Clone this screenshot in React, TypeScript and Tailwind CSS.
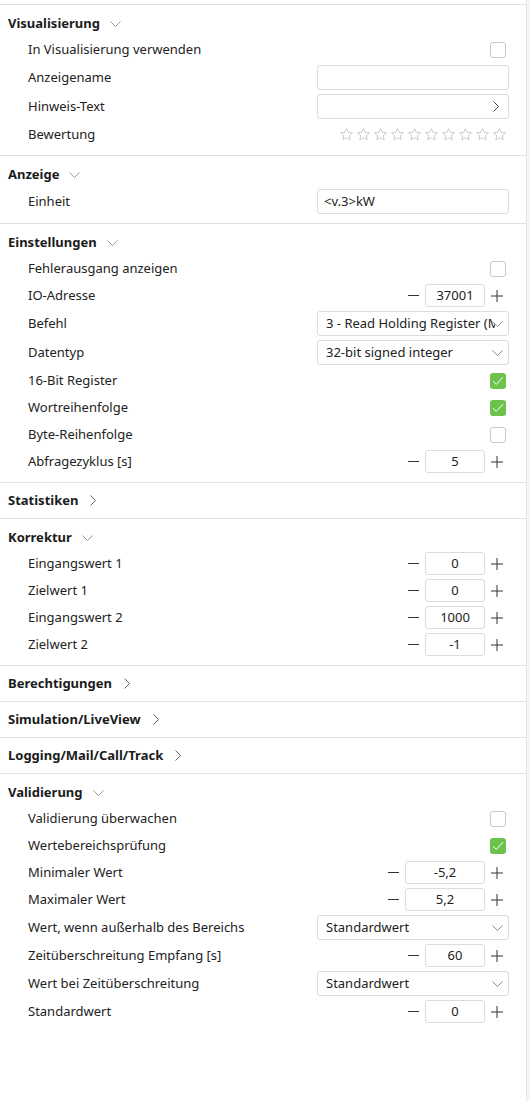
import React from 'react'

type Row =
  | { kind: 'check'; label: string; checked?: boolean }
  | { kind: 'text'; label: string; value?: string; arrow?: boolean }
  | { kind: 'select'; label: string; value: string }
  | { kind: 'number'; label: string; value: string; wide?: boolean }
  | { kind: 'stars'; label: string }

type Section = { title: string; open: boolean; rows?: Row[] }

const sections: Section[] = [
  {
    title: 'Visualisierung',
    open: true,
    rows: [
      { kind: 'check', label: 'In Visualisierung verwenden' },
      { kind: 'text', label: 'Anzeigename' },
      { kind: 'text', label: 'Hinweis-Text', arrow: true },
      { kind: 'stars', label: 'Bewertung' },
    ],
  },
  {
    title: 'Anzeige',
    open: true,
    rows: [{ kind: 'text', label: 'Einheit', value: '<v.3>kW' }],
  },
  {
    title: 'Einstellungen',
    open: true,
    rows: [
      { kind: 'check', label: 'Fehlerausgang anzeigen' },
      { kind: 'number', label: 'IO-Adresse', value: '37001' },
      { kind: 'select', label: 'Befehl', value: '3 - Read Holding Register (Modbus)' },
      { kind: 'select', label: 'Datentyp', value: '32-bit signed integer' },
      { kind: 'check', label: '16-Bit Register', checked: true },
      { kind: 'check', label: 'Wortreihenfolge', checked: true },
      { kind: 'check', label: 'Byte-Reihenfolge' },
      { kind: 'number', label: 'Abfragezyklus [s]', value: '5' },
    ],
  },
  { title: 'Statistiken', open: false },
  {
    title: 'Korrektur',
    open: true,
    rows: [
      { kind: 'number', label: 'Eingangswert 1', value: '0' },
      { kind: 'number', label: 'Zielwert 1', value: '0' },
      { kind: 'number', label: 'Eingangswert 2', value: '1000' },
      { kind: 'number', label: 'Zielwert 2', value: '-1' },
    ],
  },
  { title: 'Berechtigungen', open: false },
  { title: 'Simulation/LiveView', open: false },
  { title: 'Logging/Mail/Call/Track', open: false },
  {
    title: 'Validierung',
    open: true,
    rows: [
      { kind: 'check', label: 'Validierung überwachen' },
      { kind: 'check', label: 'Wertebereichsprüfung', checked: true },
      { kind: 'number', label: 'Minimaler Wert', value: '-5,2', wide: true },
      { kind: 'number', label: 'Maximaler Wert', value: '5,2', wide: true },
      { kind: 'select', label: 'Wert, wenn außerhalb des Bereichs', value: 'Standardwert' },
      { kind: 'number', label: 'Zeitüberschreitung Empfang [s]', value: '60' },
      { kind: 'select', label: 'Wert bei Zeitüberschreitung', value: 'Standardwert' },
      { kind: 'number', label: 'Standardwert', value: '0' },
    ],
  },
]

function ChevronDown({ className = '' }: { className?: string }) {
  return (
    <svg width="11" height="6" viewBox="0 0 11 6" className={className} fill="none">
      <path d="M0.5 0.5 L5.5 5.5 L10.5 0.5" stroke="currentColor" strokeWidth="1" />
    </svg>
  )
}

function ChevronRight({ className = '' }: { className?: string }) {
  return (
    <svg width="6" height="11" viewBox="0 0 6 11" className={className} fill="none">
      <path d="M0.5 0.5 L5.5 5.5 L0.5 10.5" stroke="currentColor" strokeWidth="1" />
    </svg>
  )
}

function Star() {
  return (
    <svg width="15" height="15" viewBox="0 0 24 24" fill="none">
      <path
        d="M12 2.5 L14.8 8.6 L21.5 9.3 L16.5 13.8 L17.9 20.5 L12 17.1 L6.1 20.5 L7.5 13.8 L2.5 9.3 L9.2 8.6 Z"
        stroke="#c4c4c4"
        strokeWidth="1.4"
        strokeLinejoin="round"
      />
    </svg>
  )
}

function Checkbox({ checked }: { checked?: boolean }) {
  return checked ? (
    <div className="mr-[3px] flex h-4 w-4 items-center justify-center rounded-[3px] bg-[#6cc24a]">
      <svg width="12" height="10" viewBox="0 0 12 10" fill="none">
        <path d="M1 5.2 L4.3 8.4 L11 1.2" stroke="white" strokeWidth="1" />
      </svg>
    </div>
  ) : (
    <div className="mr-[3px] h-4 w-4 rounded-[3px] border border-[#c8c8c8] bg-white" />
  )
}

function NumberInput({ value, wide }: { value: string; wide?: boolean }) {
  return (
    <div className="flex items-center">
      <button className="flex h-[23px] w-6 items-center justify-center">
        <svg width="11" height="11" viewBox="0 0 11 11">
          <path d="M0 5.5 H11" stroke="#333" strokeWidth="1" />
        </svg>
      </button>
      <div
        className={`flex h-[23px] items-center justify-center rounded-[3px] border border-[#dcdcdc] bg-white text-[13px] text-[#222] ${
          wide ? 'w-[80px]' : 'w-[60px]'
        }`}
      >
        {value}
      </div>
      <button className="flex h-[23px] w-6 items-center justify-center">
        <svg width="12" height="12" viewBox="0 0 12 12">
          <path d="M0 6 H12 M6 0 V12" stroke="#333" strokeWidth="1" />
        </svg>
      </button>
    </div>
  )
}

function Control({ row }: { row: Row }) {
  switch (row.kind) {
    case 'check':
      return <Checkbox checked={row.checked} />
    case 'number':
      return <NumberInput value={row.value} wide={row.wide} />
    case 'text':
      return (
        <div className="flex h-[25px] w-[192px] items-center justify-between rounded-[3px] border border-[#dcdcdc] bg-white pl-[6px] pr-[9px] text-[13px] text-[#222]">
          <span>{row.value ?? ''}</span>
          {row.arrow && <ChevronRight className="text-[#444]" />}
        </div>
      )
    case 'select':
      return (
        <div className="relative flex h-[25px] w-[192px] items-center rounded-[3px] border border-[#dcdcdc] bg-white pl-[8px] pr-[13px] text-[13px] text-[#222]">
          <span className="overflow-hidden whitespace-nowrap">{row.value}</span>
          <ChevronDown className="absolute right-[5px] top-[9px] text-[#888]" />
        </div>
      )
    case 'stars':
      return (
        <div className="mr-[2px] flex gap-[2px]">
          {Array.from({ length: 10 }).map((_, i) => (
            <Star key={i} />
          ))}
        </div>
      )
  }
}

function rowHeight(row: Row) {
  return row.kind === 'text' || row.kind === 'select' ? 'h-[29px]' : 'h-[27px]'
}

export default function App() {
  return (
    <div
      className="flex min-h-[1101px] w-[530px] bg-white"
      style={{ fontFamily: '"Noto Sans", "Open Sans", sans-serif' }}
    >
      <div className="w-[527px] border-r border-[#e6e6e6] pt-1">
        {sections.map((s) => (
          <div
            key={s.title}
            className={`border-t border-[#e0e0e0] ${s.open ? 'pb-[7px] pt-[6px]' : 'pb-[5px] pt-[5px]'}`}
          >
            <div className="flex h-[25px] items-center pl-2 text-[13px] font-bold text-[#1b1b1b]">
              <span>{s.title}</span>
              {s.open ? (
                <ChevronDown className="ml-[10px] text-[#9a9a9a]" />
              ) : (
                <ChevronRight className="ml-[12px] text-[#666]" />
              )}
            </div>
            {s.open &&
              s.rows?.map((r) => (
                <div
                  key={r.label}
                  className={`flex items-center justify-between pl-7 pr-[17px] text-[13px] text-[#222] ${rowHeight(r)}`}
                >
                  <span>{r.label}</span>
                  <Control row={r} />
                </div>
              ))}
          </div>
        ))}
      </div>
      <div className="flex-1 bg-[#f6f6f6]" />
    </div>
  )
}
